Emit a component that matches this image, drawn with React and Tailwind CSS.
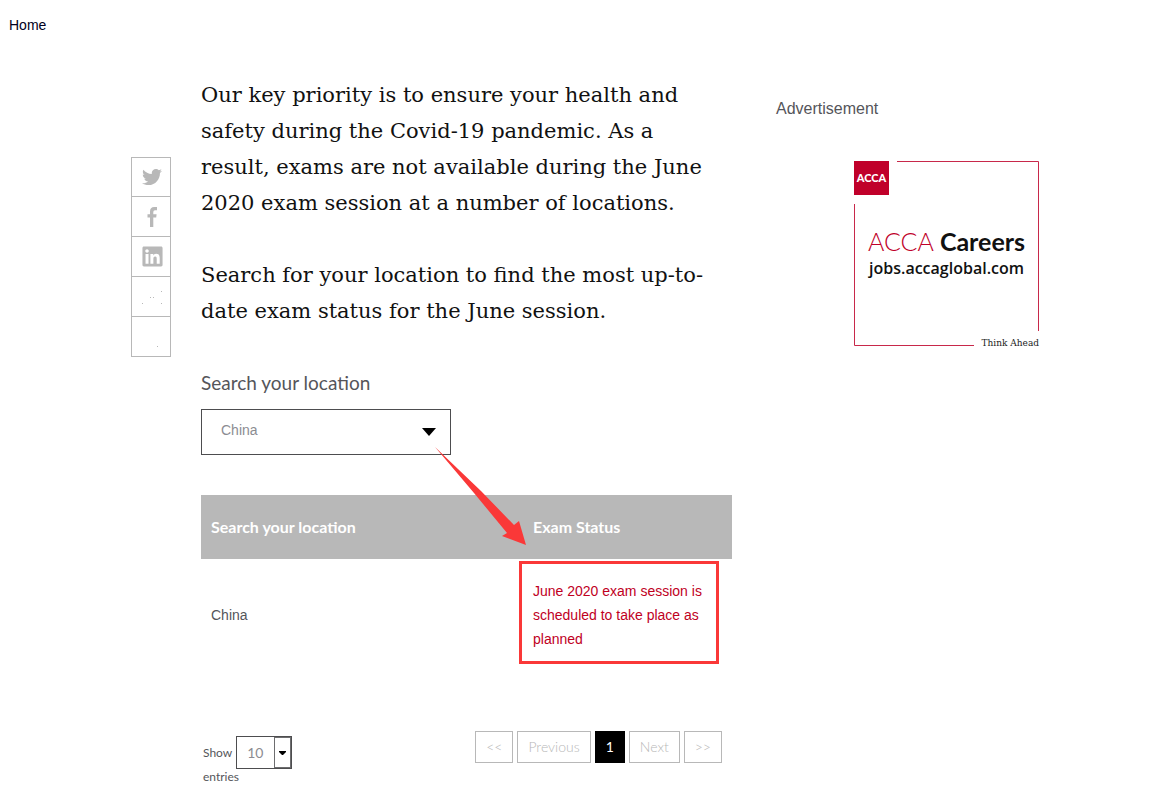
import { useState } from "react";
import { FaLinkedin, FaTwitter } from "react-icons/fa";

const countries = ["China", "Hong Kong", "India", "United Kingdom"];

function FacebookIcon() {
  return (
    <svg width="20" height="20" viewBox="0 0 20 20" fill="currentColor" aria-hidden="true">
      <path d="M8 20V10.500H5.500V7.300H8V4.500Q8 0 12.200 0H15v3.200h-2q-1.700 0-1.700 1.700v2.400H14.600l-.4 3.200h-2.900V20z" />
    </svg>
  );
}

function EmailDots() {
  return (
    <svg width="20" height="20" viewBox="0 0 20 20" fill="#b8b8b8" aria-hidden="true">
      <path d="M19 4h1v1h-1zM8 10h1v1h-1zM11 10h1v1h-1zM0 16h1v1H0zM19 16h1v1h-1z" />
    </svg>
  );
}

function MoreDots() {
  return (
    <svg width="20" height="20" viewBox="0 0 20 20" fill="#b8b8b8" aria-hidden="true">
      <path d="M15 19h1v1h-1z" />
    </svg>
  );
}

const shareLinks = [
  { label: "Twitter", icon: <FaTwitter size={20} /> },
  { label: "Facebook", icon: <FacebookIcon /> },
  { label: "LinkedIn", icon: <FaLinkedin size={23} /> },
  { label: "Email", icon: <EmailDots /> },
  { label: "More", icon: <MoreDots /> },
];

function ShareBar() {
  return (
    <ul className="mt-20 w-10 shrink-0">
      {shareLinks.map(({ label, icon }) => (
        <li key={label} className="h-10 border-x border-b border-[#b8b8b8] first:border-t">
          <a
            href="#share"
            aria-label={label}
            className="flex h-full items-center justify-center pl-0.5 text-[#b8b8b8]"
          >
            {icon}
          </a>
        </li>
      ))}
    </ul>
  );
}

function LocationSelect({ value, onChange }) {
  return (
    <div className="mt-10">
      <label htmlFor="location" className="block font-['Lato',sans-serif] text-[19px] leading-7 text-[#55555a]">
        Search your location
      </label>
      <div className="relative mt-3 w-[250px]">
        <select
          id="location"
          value={value}
          onChange={(e) => onChange(e.target.value)}
          className="h-[46px] w-full appearance-none border border-[#4d4d4f] bg-white pb-1 pl-[19px] text-sm text-[#8c8c92]"
        >
          {countries.map((country) => (
            <option key={country}>{country}</option>
          ))}
        </select>
        <svg
          className="pointer-events-none absolute top-[19px] right-[14px]"
          width="16"
          height="8"
          viewBox="0 0 16 8"
          aria-hidden="true"
        >
          <path d="M1 0h14L8 8z" />
        </svg>
      </div>
    </div>
  );
}

function StatusTable({ country }) {
  return (
    <div className="relative mt-10">
      <table className="w-full table-fixed text-left">
        <thead>
          <tr className="h-16 bg-[#b8b8b8] font-['Lato',sans-serif] text-base text-white">
            <th className="px-[10px] font-bold">Search your location</th>
            <th className="w-[209px] px-[10px] font-bold">Exam Status</th>
          </tr>
        </thead>
        <tbody>
          <tr className="h-28 text-sm leading-6">
            <td className="px-[10px] text-[#55555a]">{country}</td>
            <td className="px-[10px] text-[#c0001e]">
              June 2020 exam session is scheduled to take place as planned
            </td>
          </tr>
        </tbody>
      </table>

      {/* highlight round the status and the arrow that leads to it */}
      <div className="pointer-events-none absolute top-[66px] right-[13px] h-[103px] w-[200px] border-3 border-[#fa3838]" />
      <svg
        className="pointer-events-none absolute -top-12 right-[206px]"
        width="91"
        height="99"
        viewBox="0 0 91 99"
        fill="#fa3838"
        aria-hidden="true"
      >
        <path d="M0 0L46 44 79 78 84 74 91 98 67 89 72 86 39 46z" />
      </svg>
    </div>
  );
}

function PageButton({ children, active }) {
  return (
    <button
      type="button"
      className={
        active
          ? "h-8 bg-black px-[11px] text-white"
          : "h-8 border border-[#b8b8b8] px-[10px] font-light text-[#b8b8b8]"
      }
    >
      {children}
    </button>
  );
}

function TableFooter() {
  return (
    <div className="mt-[60px] flex items-start justify-between pr-[10px] font-['Lato',sans-serif]">
      <label className="mt-[5px] ml-[2px] block w-24 text-xs text-[#55555a]">
        <span className="flex items-center gap-1">
          Show
          <span className="relative">
            <select
              defaultValue="10"
              className="h-[33px] w-14 appearance-none border border-[#4d4d4f] bg-white pl-[10px] text-sm text-[#8c8c92]"
            >
              <option>10</option>
              <option>25</option>
              <option>50</option>
            </select>
            <span className="pointer-events-none absolute top-px right-px flex h-[31px] w-[17px] items-center justify-center border border-[#6d6d6f]">
              <svg width="7" height="4" viewBox="0 0 7 4" aria-hidden="true">
                <path d="M0 0h7v1L4 4H3L0 1z" fill="#000" />
              </svg>
            </span>
          </span>
        </span>
        entries
      </label>
      <nav aria-label="Pages" className="flex gap-1 text-sm">
        <PageButton>&lt;&lt;</PageButton>
        <PageButton>Previous</PageButton>
        <PageButton active>1</PageButton>
        <PageButton>Next</PageButton>
        <PageButton>&gt;&gt;</PageButton>
      </nav>
    </div>
  );
}

function CareersAd() {
  return (
    <a href="#careers" className="mx-auto mt-10 block w-[186px]">
      <svg width="186" height="188" viewBox="0 0 186 188" role="img" aria-label="ACCA Careers">
        <path d="M43 .5H184.500V170M.5 43V184.500H120" fill="none" stroke="#c8284a" />
        <path d="M0 0h35v34H0z" fill="#c0002a" />
        <text x="17.500" y="21" textAnchor="middle" fill="#fff" fontFamily="Lato, sans-serif" fontWeight="900" fontSize="11">
          ACCA
        </text>
        <text x="92.500" y="90" textAnchor="middle" fontFamily="Lato, sans-serif" fontSize="25">
          <tspan fill="#c0002a" fontWeight="300">ACCA</tspan>
          <tspan fill="#111" fontWeight="700"> Careers</tspan>
        </text>
        <text x="92.500" y="113" textAnchor="middle" fill="#111" fontFamily="'Open Sans', sans-serif" fontWeight="600" fontSize="16">
          jobs.accaglobal.com
        </text>
        <text x="185" y="185" textAnchor="end" fill="#222" fontFamily="'DejaVu Serif Condensed', 'DejaVu Serif', serif" fontSize="10">
          Think Ahead
        </text>
      </svg>
    </a>
  );
}

export default function App() {
  const [country, setCountry] = useState("China");

  return (
    <div className="bg-white font-['Liberation_Sans',Arial,sans-serif]">
      <header className="px-[9px] pt-[15px]">
        <a href="#home" className="block w-fit text-sm leading-5 text-[#000020]">
          Home
        </a>
      </header>
      <div className="mt-[42px] flex pr-[39px] pb-6 pl-[131px]">
        <ShareBar />
        <main className="ml-[30px] min-w-0 flex-1">
          <div className="space-y-9 font-['DejaVu_Serif',serif] text-[21px] leading-9 whitespace-nowrap text-[#111]">
            <p>
              Our key priority is to ensure your health and
              <br />
              safety during the Covid-19 pandemic. As a
              <br />
              result, exams are not available during the June
              <br />
              2020 exam session at a number of locations.
            </p>
            <p>
              Search for your location to find the most up-to-
              <br />
              date exam status for the June session.
            </p>
          </div>
          <LocationSelect value={country} onChange={setCountry} />
          <StatusTable country={country} />
          <TableFooter />
        </main>
        <aside className="ml-11 w-[342px] shrink-0 pt-5">
          <p className="text-base text-[#55555a]">Advertisement</p>
          <CareersAd />
        </aside>
      </div>
    </div>
  );
}
